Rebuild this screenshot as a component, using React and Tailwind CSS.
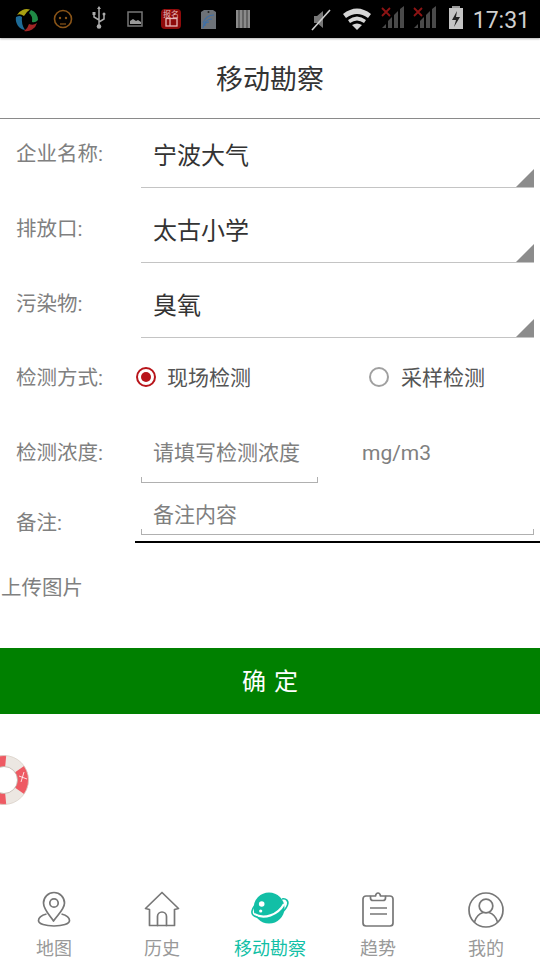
import React from "react";

const fieldRows = [
  { label: "企业名称:", value: "宁波大气" },
  { label: "排放口:", value: "太古小学" },
  { label: "污染物:", value: "臭氧" },
];

function StatusBar() {
  return (
    <div className="h-[38px] shrink-0 bg-black flex items-center relative shadow-[0_1px_2px_rgba(0,0,0,0.3)]">
      <svg width="300" height="38" viewBox="0 0 300 38" className="shrink-0">
        {/* app logo */}
        <path d="M17 15 A11 11 0 0 1 30 9.5 Q26 12 24 16 Q20 13 17 15 Z" fill="#a8a012" />
        <path d="M31 10 A11 11 0 0 1 38 20 Q35.5 23 32 22 Q33 16 29 13 Z" fill="#1f8a45" />
        <path d="M37 23 A11 11 0 0 1 24 31 Q28 28 29 24 Q33 26 37 23 Z" fill="#a12525" />
        <path d="M16 17 Q20 15 22 17 Q21 24 25 30 A11 11 0 0 1 16 17 Z" fill="#1d6a96" />
        {/* face */}
        <circle cx="63" cy="19" r="8.5" fill="none" stroke="#8a5518" strokeWidth="1.6" />
        <circle cx="60" cy="18" r="1.2" fill="#8a5518" />
        <circle cx="66" cy="18" r="1.2" fill="#8a5518" />
        <path d="M60 24h6" stroke="#8a5518" strokeWidth="1.2" />
        {/* usb */}
        <path d="M99 9v17M99 20l-5-3v-3M99 22l5-3v-4" stroke="#aaa" strokeWidth="1.5" fill="none" />
        <circle cx="99" cy="26.5" r="2.3" fill="#aaa" />
        <path d="M99 6l-2 3h4z" fill="#aaa" />
        <rect x="92.5" y="12" width="3" height="3" fill="#aaa" />
        <circle cx="104" cy="14" r="1.5" fill="#aaa" />
        {/* picture */}
        <rect x="128" y="12" width="14" height="14" fill="none" stroke="#777" strokeWidth="1.5" />
        <path d="M130 24v-3l3-2 3 2 2-1 3 2v2z" fill="#999" />
        {/* red badge */}
        <rect x="161" y="9" width="20" height="20" rx="4" fill="#8e0b0b" />
        <text x="171" y="16.5" textAnchor="middle" fontSize="8" fill="#e8b9b9">报名</text>
        <rect x="166" y="18.5" width="11" height="7.5" fill="none" stroke="#e8b9b9" strokeWidth="1.3" />
        <path d="M170 18.5v7.5" stroke="#e8b9b9" strokeWidth="1.2" />
        {/* sd card */}
        <path d="M201 12l3-2h9l3 2v17h-15z" fill="#6d7278" />
        <circle cx="208.5" cy="12" r="1" fill="#222" />
        <path d="M203 28a9 9 0 0 1 9-9M203 28a6 6 0 0 1 6-6M203 28a3 3 0 0 1 3-3M203 23a12 12 0 0 1 11-8" stroke="#3c6fa8" strokeWidth="1.1" fill="none" />
        {/* barcode */}
        <path d="M236 10h14v18h-14z" fill="#8a8a8a" />
        <path d="M239 10v18M243 10v18M247 10v18" stroke="#3a3a3a" strokeWidth="1" />
      </svg>
      <svg width="240" height="38" viewBox="300 0 240 38" className="absolute left-[300px] top-0">
        {/* muted */}
        <path d="M314 16h3l6-5v17l-6-5h-3z" fill="#777" />
        <path d="M312 30l18-20" stroke="#cfcfcf" strokeWidth="1.6" />
        {/* wifi */}
        <path d="M343 14q14-11 28 0l-3 4q-11-8-22 0z" fill="#d5d5d5" />
        <path d="M348 20q9-7 18 0l-2 3q-7-5-14 0z" fill="#d5d5d5" />
        <path d="M352 25q5-3 10 0l-5 5z" fill="#d5d5d5" />
        {/* signal 1 */}
        <path d="M382 28l4-4v4zM388 28v-7l4-4v11zM394 28v-13l4-4v17zM400 28v-19l4-3v22z" fill="#4a4a4a" />
        <path d="M382 8l8 8M390 8l-8 8" stroke="#8e1414" strokeWidth="1.8" />
        {/* signal 2 */}
        <path d="M414 28l4-4v4zM420 28v-7l4-4v11zM426 28v-13l4-4v17zM432 28v-19l4-3v22z" fill="#4a4a4a" />
        <path d="M414 8l8 8M422 8l-8 8" stroke="#8e1414" strokeWidth="1.8" />
        {/* battery */}
        <rect x="452" y="6" width="8" height="3" fill="#999" />
        <rect x="449" y="8" width="14" height="21" fill="#c4c4c4" />
        <path d="M457 11l-5 9h4l-2 7 6-10h-4z" fill="#222" />
      </svg>
      <span className="absolute right-[10px] top-[4px] text-[23px] leading-[34px] text-[#cfcfcf] font-['Roboto',sans-serif]">17:31</span>
    </div>
  );
}

function SelectRow({ label, value }) {
  return (
    <div className="flex items-center h-[69px] mb-[6px]">
      <span className="w-[141px] pl-4 pt-[2px] text-[20.5px] text-[#808080]">{label}</span>
      <div className="relative w-[393px] h-full flex items-center pl-[12px] pt-[5px] border-b border-[#c4c4c4] text-[24px] text-[#333]">
        {value}
        <div className="absolute right-0 bottom-0 w-[18px] h-[18px] bg-[#8c8c8c] [clip-path:polygon(100%_0,100%_100%,0_100%)]" />
      </div>
    </div>
  );
}

function Radio({ checked, label, className }) {
  return (
    <div className={`flex items-center ${className}`}>
      <span className={`w-[20px] h-[20px] rounded-full border-2 flex items-center justify-center ${checked ? "border-[#b8151b]" : "border-[#a0a0a0]"}`}>
        {checked && <span className="w-[10px] h-[10px] rounded-full bg-[#b8151b]" />}
      </span>
      <span className={`pt-[4px] text-[21px] text-[#555] ${checked ? "ml-[11px]" : "ml-[12px]"}`}>{label}</span>
    </div>
  );
}

function NavIcon({ name }) {
  if (name === "map") {
    return (
      <svg width="36" height="38" viewBox="0 0 36 38" fill="none" stroke="#777" strokeWidth="1.7" strokeLinejoin="round">
        <path d="M18 30 C13 23 8 18 8 12 a10.5 10.5 0 0 1 21 0 C29 18 23 23 18 30z" transform="translate(-0.5 0)" />
        <circle cx="18" cy="12" r="4.2" />
        <path d="M10.5 23 C5 24.5 2.5 27 2.5 29.5 C2.5 33 9.5 35 18 35 S33.5 33 33.5 29.5 C33.5 27 31 24.5 25.5 23" />
      </svg>
    );
  }
  if (name === "home") {
    return (
      <svg width="36" height="38" viewBox="0 0 36 38" fill="none" stroke="#777" strokeWidth="1.7" strokeLinejoin="round" strokeLinecap="round">
        <path d="M18 1.5 L1.5 17.5 L5.5 18.5 V34.5 H30.5 V18.5 L34.5 17.5 Z" />
        <path d="M13.5 34.5 V25.5 a4.5 4.5 0 0 1 9 0 V34.5" />
      </svg>
    );
  }
  if (name === "planet") {
    return (
      <svg width="40" height="38" viewBox="0 0 40 38" fill="none">
        <circle cx="19" cy="17" r="15.5" fill="#12bfa6" />
        <path d="M4 23 C14 29 28 24 34 13" stroke="#fff" strokeWidth="2.2" />
        <path d="M4.5 15 C2 18 1 22 3 24 C4 25 6 26 8 26.500" stroke="#12bfa6" strokeWidth="1.6" />
        <path d="M32 8 C36 7 39 10 37.5 14 C36 18 33 21 30 23" stroke="#12bfa6" strokeWidth="1.6" />
        <circle cx="11.7" cy="13" r="2.8" fill="#fff" />
        <circle cx="10.7" cy="20" r="1.6" fill="#fff" />
      </svg>
    );
  }
  if (name === "clip") {
    return (
      <svg width="36" height="38" viewBox="0 0 36 38" fill="none" stroke="#777" strokeWidth="1.7" strokeLinejoin="round">
        <path d="M10.5 5 H6 a3 3 0 0 0 -3 3 V32 a3 3 0 0 0 3 3 H30 a3 3 0 0 0 3 -3 V8 a3 3 0 0 0 -3 -3 H25.5" />
        <path d="M10.5 5 H15.5 Q16 2 18 2 Q20 2 20.5 5 H25.5 V7 Q25.5 9.5 23 9.5 H13 Q10.5 9.5 10.5 7 Z" />
        <path d="M10 17 H27 M10 23 H27" />
      </svg>
    );
  }
  return (
    <svg width="36" height="38" viewBox="0 0 36 38" fill="none" stroke="#777" strokeWidth="1.7">
      <circle cx="18" cy="19" r="17" />
      <circle cx="18" cy="15" r="6.8" />
      <path d="M6.5 31 C8 25.5 12 22.5 15 21.5 M29.5 31 C28 25.5 24 22.5 21 21.5" />
    </svg>
  );
}

const tabs = [
  { icon: "map", label: "地图" },
  { icon: "home", label: "历史" },
  { icon: "planet", label: "移动勘察", active: true },
  { icon: "clip", label: "趋势" },
  { icon: "user", label: "我的" },
];

function Lifebuoy() {
  return (
    <svg width="50" height="52" viewBox="0 0 50 52" className="absolute left-[-21px] top-[754px]">
      <circle cx="25" cy="26" r="19" fill="none" stroke="#ece7e2" strokeWidth="11" />
      <path d="M40.6 15.1 A19 19 0 0 1 40.6 36.9" fill="none" stroke="#ee5a63" strokeWidth="11" />
      <path d="M26.7 7.1 A19 19 0 0 0 12.8 11.4" fill="none" stroke="#ee5a63" strokeWidth="11" />
      <path d="M26.7 44.9 A19 19 0 0 1 12.8 40.6" fill="none" stroke="#ee5a63" strokeWidth="11" />
      <circle cx="25" cy="26" r="24.5" fill="none" stroke="#d9d0c8" strokeWidth="0.8" />
      <circle cx="25" cy="26" r="13.5" fill="none" stroke="#bdb2a9" strokeWidth="0.8" />
      <path d="M40 22l8 3M45 18l-3 10" stroke="#fff" strokeWidth="0.8" />
    </svg>
  );
}

export default function App() {
  return (
    <div className="relative w-[540px] h-[960px] overflow-hidden bg-white flex flex-col font-['Roboto','Noto_Sans_CJK_SC',sans-serif]">
      <StatusBar />

      <div className="h-[81px] shrink-0 flex items-center justify-center pt-[4px] border-b border-[#8a8a8a] text-[27px] text-[#333]">
        移动勘察
      </div>

      <div className="shrink-0">
        {fieldRows.map((row) => (
          <SelectRow key={row.label} {...row} />
        ))}
      </div>

      <div className="h-[78px] -mt-[6px] shrink-0 flex items-center">
        <span className="w-[136px] pl-4 pt-[2px] text-[20.5px] text-[#808080]">检测方式:</span>
        <Radio checked label="现场检测" />
        <Radio label="采样检测" className="ml-[118px]" />
      </div>

      <div className="h-[68px] -mt-[1px] shrink-0 flex relative">
        <span className="w-[141px] pl-4 pt-[23px] text-[20.5px] text-[#808080]">检测浓度:</span>
        <div className="w-[177px] h-[68px] relative">
          <span className="absolute left-[12px] top-[23px] text-[21px] text-[#808080]">请填写检测浓度</span>
          <div className="absolute left-0 right-0 bottom-0 h-[6px] border-b border-x border-[#b0b0b0]" />
        </div>
        <span className="ml-[44px] pt-[23px] text-[21px] text-[#808080]">mg/m3</span>
      </div>

      <div className="h-[52px] shrink-0 flex">
        <span className="w-[141px] pl-4 pt-[25px] text-[20.5px] text-[#808080]">备注:</span>
        <div className="w-[393px] h-[52px] relative">
          <span className="absolute left-[12px] top-[17px] text-[21px] text-[#808080]">备注内容</span>
          <div className="absolute left-0 right-0 bottom-0 h-[6px] border-b border-x border-[#b0b0b0]" />
        </div>
      </div>

      <div className="ml-[135px] mt-[6px] h-[2px] shrink-0 bg-black" />

      <div className="pl-[1px] mt-[30px] text-[20.5px] leading-[30px] text-[#808080] shrink-0">上传图片</div>

      <button className="mt-[45px] h-[66px] shrink-0 bg-[#008000] text-white text-[24px] tracking-[8px] pl-[8px] pt-[2px]">确定</button>

      <Lifebuoy />

      <div className="mt-auto h-[69px] shrink-0 flex">
        {tabs.map((tab) => (
          <div key={tab.label} className="w-[108px] flex flex-col items-center">
            <div className="h-[38px] flex items-center justify-center">
              <NavIcon name={tab.icon} />
            </div>
            <span className={`mt-[8px] text-[18px] leading-[24px] ${tab.active ? "text-[#12bfa6]" : "text-[#999]"}`}>{tab.label}</span>
          </div>
        ))}
      </div>
    </div>
  );
}
